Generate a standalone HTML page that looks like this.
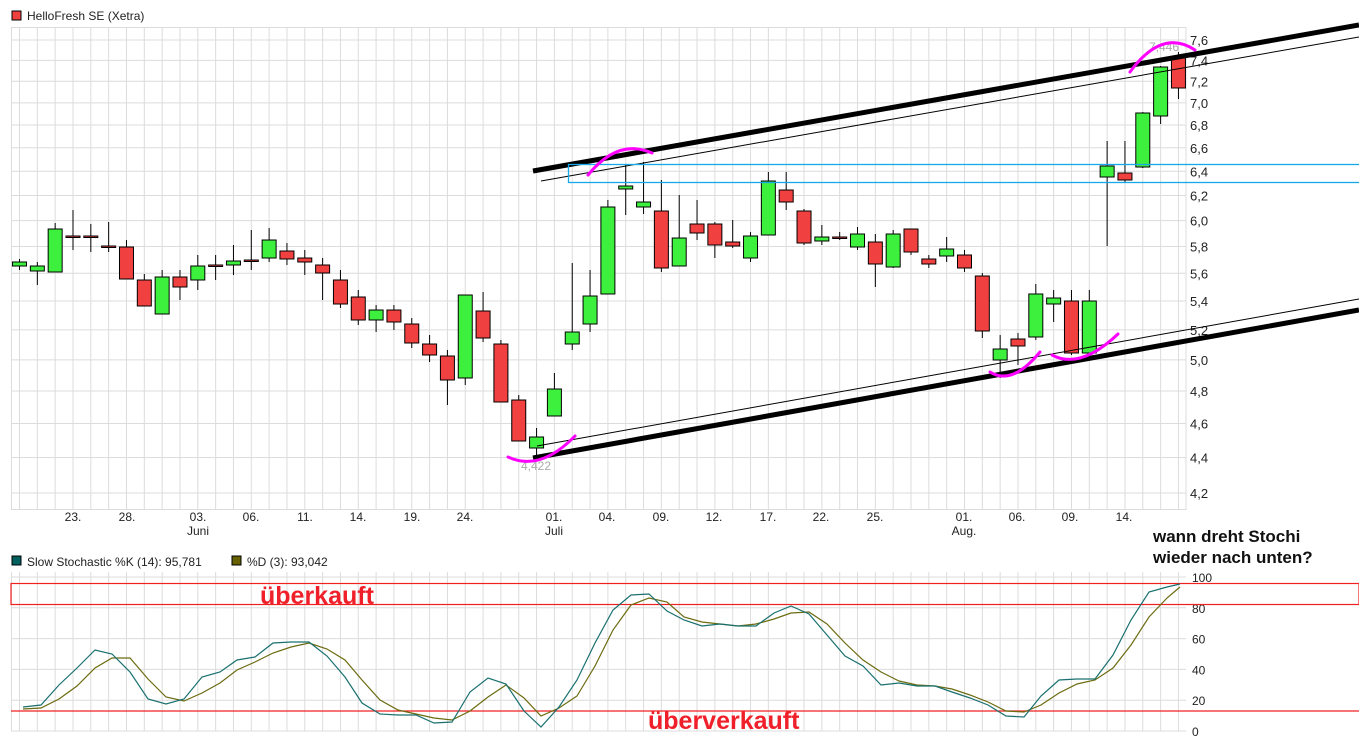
<!DOCTYPE html>
<html><head><meta charset="utf-8"><style>
html,body{margin:0;padding:0;background:#fff;}
svg{display:block;font-family:"Liberation Sans",sans-serif;}
</style></head><body>
<svg id="s" width="1359" height="744" viewBox="0 0 1359 744" xmlns="http://www.w3.org/2000/svg">
<rect width="1359" height="744" fill="#fff"/>
<g id="grid" stroke="#dcdcdc" stroke-width="1"></g>
<g id="cand"></g>
<g id="lbl" font-size="12" fill="#222"></g>
<rect x="12" y="11" width="9" height="9" fill="#f04040" stroke="#000" stroke-width="1"/>
<text x="27" y="20" font-size="12" fill="#222">HelloFresh SE (Xetra)</text>
<!-- channel -->
<line x1="533" y1="171" x2="1359" y2="25" stroke="#000" stroke-width="5"/>
<line x1="541" y1="181" x2="1359" y2="37" stroke="#000" stroke-width="1"/>
<line x1="533" y1="458" x2="1359" y2="310" stroke="#000" stroke-width="5"/>
<line x1="537" y1="446" x2="1359" y2="299" stroke="#000" stroke-width="1"/>
<rect x="568.5" y="164.5" width="800" height="18" fill="none" stroke="#16a8e8" stroke-width="1.3"/>
<text x="1149" y="51" font-size="12" fill="#aaa">7,446</text>
<text x="521" y="470" font-size="12" fill="#aaa">4,422</text>
<g fill="none" stroke="#f0f" stroke-width="3" stroke-linecap="round">
<path d="M588 175 Q618 138 652 153"/>
<path d="M508 457 Q540 472 575 436"/>
<path d="M990 372 Q1012 386 1040 352"/>
<path d="M1052 355 Q1080 370 1118 334"/>
<path d="M1130 72 Q1162 28 1195 50"/>
</g>
<text x="1153" y="542" font-size="17" font-weight="bold" fill="#111">wann dreht Stochi</text>
<text x="1153" y="563" font-size="17" font-weight="bold" fill="#111">wieder nach unten?</text>
<rect x="12" y="556" width="9" height="9" fill="#006060" stroke="#000"/>
<text x="27" y="566" font-size="12" fill="#222">Slow Stochastic %K (14): 95,781</text>
<rect x="232" y="556" width="9" height="9" fill="#666000" stroke="#000"/>
<text x="247" y="566" font-size="12" fill="#222">%D (3): 93,042</text>
<rect x="11" y="583.5" width="1348" height="21" fill="none" stroke="#f02020" stroke-width="1.2"/>
<line x1="11" y1="711" x2="1359" y2="711" stroke="#f02020" stroke-width="1.2"/>
<text x="260" y="604" font-size="25" font-weight="bold" fill="#f0202a">überkauft</text>
<text x="648" y="729" font-size="25" font-weight="bold" fill="#f0202a">überverkauft</text>
<polyline id="pd" fill="none" stroke="#6b6b10" stroke-width="1.2"/>
<polyline id="pk" fill="none" stroke="#1a7070" stroke-width="1.2"/>
</svg>
<script>
var NS="http://www.w3.org/2000/svg";
function el(p,t,a){var e=document.createElementNS(NS,t);for(var k in a)e.setAttribute(k,a[k]);p.appendChild(e);return e;}
var g=document.getElementById('grid'),c=document.getElementById('cand'),l=document.getElementById('lbl');
function X(i){return 19.5+i*17.83;}
var prices=[7.6,7.4,7.2,7.0,6.8,6.6,6.4,6.2,6.0,5.8,5.6,5.4,5.2,5.0,4.8,4.6,4.4,4.2];
function Y(p){return 40+763.9*(Math.log(7.6)-Math.log(p));}
// top grid
for(var i=0;i<66;i++){el(g,'line',{x1:X(i),y1:27,x2:X(i),y2:510});el(g,'line',{x1:X(i),y1:572,x2:X(i),y2:731});}
el(g,'line',{x1:11.5,y1:27,x2:11.5,y2:510});el(g,'line',{x1:1186,y1:27,x2:1186,y2:510});
el(g,'line',{x1:11,y1:27.5,x2:1186,y2:27.5});el(g,'line',{x1:11,y1:509.5,x2:1186,y2:509.5});
prices.forEach(function(p){var y=Y(p);el(g,'line',{x1:11,y1:y,x2:1186,y2:y});
 var t=el(l,'text',{x:1190,y:y+5,'font-size':13});t.textContent=p.toFixed(1).replace('.',',');});
[100,80,60,40,20,0].forEach(function(v){var y=731-v*1.54;el(g,'line',{x1:11,y1:y,x2:1186,y2:y});
 var t=el(l,'text',{x:v==100?1192:(v==0?1192:1192),y:y+5,'font-size':12});t.textContent=v;});
el(g,'line',{x1:11.5,y1:572,x2:11.5,y2:731});
var xl=[[73,'23.'],[127,'28.'],[198,'03.'],[251,'06.'],[305,'11.'],[358,'14.'],[412,'19.'],[465,'24.'],[554,'01.'],[607,'04.'],[661,'09.'],[714,'12.'],[768,'17.'],[821,'22.'],[875,'25.'],[964,'01.'],[1017,'06.'],[1070,'09.'],[1124,'14.']];
xl.forEach(function(a){var t=el(l,'text',{x:a[0],y:521,'text-anchor':'middle'});t.textContent=a[1];});
[[198,'Juni'],[554,'Juli'],[964,'Aug.']].forEach(function(a){var t=el(l,'text',{x:a[0],y:535,'text-anchor':'middle'});t.textContent=a[1];});
// candles: [top,bottom,wickHigh,wickLow,green?]
var d=[[262,266,259,270,1],[266,271,262,285,1],[229,272,223,272,1],[236,237,210,250,0],[236,237,224,252,0],[246,247,222,252,0],[247,279,240,279,0],[280,306,274,306,0],[277,314,270,314,1],[277,287,270,300,0],[266,280,255,290,1],[265,266,255,280,0],[261,265,245,275,1],[260,261,230,270,0],[240,258,228,262,1],[251,259,243,265,0],[258,262,250,275,0],[265,273,258,300,0],[280,304,270,308,0],[297,320,290,325,0],[310,320,305,332,1],[310,322,305,330,0],[324,343,318,348,0],[344,355,335,362,0],[356,380,350,405,0],[295,378,295,385,1],[311,338,292,342,0],[344,402,340,402,0],[400,441,395,441,0],[437,448,428,458,1],[389,416,373,416,1],[332,344,263,350,1],[296,324,270,332,1],[207,294,200,294,1],[186,189,165,215,1],[202,207,162,214,1],[211,268,180,272,0],[238,266,195,266,1],[224,233,200,240,0],[224,245,222,258,0],[242,246,220,248,0],[236,258,232,262,1],[181,235,172,235,1],[190,202,172,210,0],[211,243,209,245,0],[237,241,225,245,1],[237,238,232,240,0],[234,247,227,250,1],[242,264,234,287,0],[234,267,230,268,1],[229,252,229,255,0],[259,264,255,268,0],[249,256,237,262,1],[255,268,250,272,0],[276,331,273,338,0],[349,360,335,378,1],[339,346,333,365,0],[294,337,284,340,1],[298,304,290,322,1],[301,353,290,355,0],[301,353,290,355,1],[166,177,141,246,1],[173,180,141,182,0],[113,167,112,168,1],[67,116,66,124,1],[58,88,52,99,0]];
d.forEach(function(a,i){var x=X(i);
 el(c,'line',{x1:x,y1:a[2],x2:x,y2:a[3],stroke:'#000','stroke-width':1});
 var h=Math.max(a[1]-a[0],1.5);
 el(c,'rect',{x:x-7,y:a[0],width:14,height:h,fill:a[4]?'#3ef03e':'#f04040',stroke:'#000','stroke-width':1});});
var K=[[23,707],[41,705],[59,685],[77,668],[95,650],[112,654],[130,672],[148,699],[166,704],[184,699],[202,677],[220,672],[237,660],[255,657],[273,643],[291,642],[309,642],[327,656],[345,677],[362,703],[380,714],[398,715],[416,715],[434,723],[452,722],[470,692],[488,678],[506,684],[524,711],[541,727],[559,707],[577,680],[595,643],[613,610],[631,595],[649,594],[667,611],[684,620],[702,626],[720,624],[738,626],[756,626],[774,613],[791,606],[809,614],[827,635],[845,656],[863,666],[881,685],[899,683],[917,686],[935,686],[952,692],[970,698],[988,705],[1006,716],[1024,717],[1041,696],[1059,680],[1077,679],[1095,679],[1113,655],[1131,620],[1149,592],[1167,587],[1180,584]];
var D=[[23,709],[41,708],[59,699],[77,686],[95,668],[112,658],[130,658],[148,679],[166,697],[184,701],[202,693],[220,683],[237,670],[255,662],[273,653],[291,647],[309,643],[327,649],[345,660],[362,680],[380,700],[398,710],[416,714],[434,718],[452,720],[470,711],[488,697],[506,685],[524,698],[541,716],[559,708],[577,696],[595,666],[613,630],[631,605],[649,598],[667,602],[684,617],[702,622],[720,624],[738,626],[756,624],[774,619],[791,613],[809,612],[827,624],[845,643],[863,660],[881,672],[899,681],[917,685],[935,686],[952,689],[970,695],[988,702],[1006,711],[1024,712],[1041,705],[1059,693],[1077,684],[1095,680],[1113,668],[1131,645],[1149,617],[1167,598],[1180,587]];
document.getElementById('pk').setAttribute('points',K.map(function(p){return p.join(',')}).join(' '));
document.getElementById('pd').setAttribute('points',D.map(function(p){return p.join(',')}).join(' '));
</script>
</body></html>
